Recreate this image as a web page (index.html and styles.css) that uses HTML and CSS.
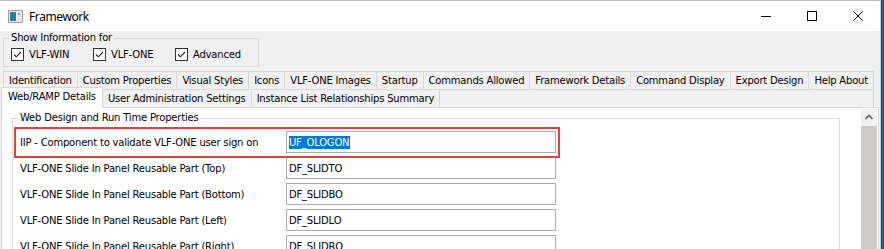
FILE: index.html
```html
<!DOCTYPE html>
<html>
<head>
<meta charset="utf-8">
<title>Framework</title>
<link rel="stylesheet" href="styles.css">
</head>
<body>
<div class="screen">
  <div class="window">
    <div class="titlebar">
      <svg class="appicon" width="15" height="13" viewBox="0 0 15 13">
        <defs>
          <linearGradient id="g1" x1="0" y1="0" x2="1" y2="1">
            <stop offset="0" stop-color="#1d8f78"/>
            <stop offset="1" stop-color="#3a6fb2"/>
          </linearGradient>
        </defs>
        <rect x="0.5" y="0.5" width="14" height="12" fill="#eeeeee" stroke="#9c9c9c"/>
        <rect x="2" y="2" width="6" height="9" fill="url(#g1)"/>
        <rect x="9" y="2" width="4" height="9" fill="#dfe6ea"/>
        <rect x="10" y="3" width="2" height="2" fill="#7fb0c8"/>
      </svg>
      <span class="title">Framework</span>
      <div class="controls">
        <span class="ctl"><svg width="10" height="10" viewBox="0 0 10 10"><line x1="0" y1="5.5" x2="10" y2="5.5" stroke="#000" stroke-width="1"/></svg></span>
        <span class="ctl"><svg width="10" height="10" viewBox="0 0 10 10"><rect x="0.5" y="0.5" width="9" height="9" fill="none" stroke="#000" stroke-width="1"/></svg></span>
        <span class="ctl"><svg width="10" height="10" viewBox="0 0 10 10"><path d="M0.5 0.5L9.5 9.5M9.5 0.5L0.5 9.5" stroke="#000" stroke-width="1"/></svg></span>
      </div>
    </div>

    <div class="showinfo">
      <div class="legend legend-grey">Show Information for</div>
      <div class="checks">
        <div class="check w82"><span class="box"><svg width="11" height="11" viewBox="0 0 11 11"><path d="M2 5.5L4.3 7.8L9 3" fill="none" stroke="#222" stroke-width="1.1"/></svg></span>VLF-WIN</div>
        <div class="check w82"><span class="box"><svg width="11" height="11" viewBox="0 0 11 11"><path d="M2 5.5L4.3 7.8L9 3" fill="none" stroke="#222" stroke-width="1.1"/></svg></span>VLF-ONE</div>
        <div class="check"><span class="box"><svg width="11" height="11" viewBox="0 0 11 11"><path d="M2 5.5L4.3 7.8L9 3" fill="none" stroke="#222" stroke-width="1.1"/></svg></span>Advanced</div>
      </div>
    </div>

    <div class="tabrow1">
      <div class="tab">Identification</div>
      <div class="tab">Custom Properties</div>
      <div class="tab">Visual Styles</div>
      <div class="tab">Icons</div>
      <div class="tab">VLF-ONE Images</div>
      <div class="tab">Startup</div>
      <div class="tab">Commands Allowed</div>
      <div class="tab">Framework Details</div>
      <div class="tab">Command Display</div>
      <div class="tab">Export Design</div>
      <div class="tab">Help About</div>
    </div>
    <div class="tabrow2">
      <div class="tab2 selected">Web/RAMP Details</div>
      <div class="tab2">User Administration Settings</div>
      <div class="tab2 last">Instance List Relationships Summary</div>
    </div>

    <div class="panel">
      <div class="scrollarea">
        <div class="props">
          <div class="legend legend-white">Web Design and Run Time Properties</div>
          <div class="rows">
            <div class="label">IIP - Component to validate VLF-ONE user sign on</div>
            <div class="input"><span class="sel">UF_OLOGON</span></div>
            <div class="label">VLF-ONE Slide In Panel Reusable Part (Top)</div>
            <div class="input">DF_SLIDTO</div>
            <div class="label">VLF-ONE Slide In Panel Reusable Part (Bottom)</div>
            <div class="input">DF_SLIDBO</div>
            <div class="label">VLF-ONE Slide In Panel Reusable Part (Left)</div>
            <div class="input">DF_SLIDLO</div>
            <div class="label">VLF-ONE Slide In Panel Reusable Part (Right)</div>
            <div class="input">DF_SLIDRO</div>
          </div>
          <div class="highlight"></div>
        </div>
      </div>
      <div class="scrollbar">
        <div class="sb-up"><svg width="16" height="17" viewBox="0 0 16 17"><path d="M4.5 10L8 6.5L11.5 10" fill="none" stroke="#606060" stroke-width="1.6"/></svg></div>
        <div class="sb-thumb"></div>
      </div>
    </div>
  </div>
  <div class="edge"></div>
</div>
</body>
</html>
```

FILE: styles.css
```css
* { box-sizing: border-box; }
html, body { margin: 0; padding: 0; }
body {
  width: 884px;
  height: 249px;
  overflow: hidden;
  background: #f0f0f0;
  font-family: "DejaVu Sans", Verdana, sans-serif;
  font-size: 10px;
  letter-spacing: -0.2px;
  color: #000;
}
.screen { display: flex; height: 249px; }
.window {
  width: 881px;
  border-top: 1px solid #bdbdbd;
  border-right: 1px solid #c6c6c6;
  background: #f0f0f0;
  display: flex;
  flex-direction: column;
  overflow: hidden;
}
.edge { width: 3px; background: #175a92; }

.titlebar {
  height: 30px;
  background: #fff;
  display: flex;
  align-items: center;
  flex: none;
}
.appicon { margin-left: 8px; display: block; }
.title {
  margin-left: 6px;
  font-family: "Noto Sans", "Open Sans", sans-serif;
  font-size: 12px;
  letter-spacing: -0.4px;
}
.controls { margin-left: auto; display: flex; height: 30px; }
.ctl {
  width: 46px;
  padding-left: 2px;
  display: flex;
  align-items: center;
  justify-content: center;
}
.ctl svg { display: block; }

.showinfo {
  margin: 7px 0 0 3px;
  width: 256px;
  border: 1px solid #dcdcdc;
  padding: 0 0 5px 7px;
  flex: none;
}
.legend {
  width: fit-content;
  margin: -8px 0 0 -2px;
  padding: 0 2px;
  line-height: 14px;
}
.legend-grey { background: #f0f0f0; }
.legend-white { background: #fff; }
.checks { display: flex; margin-top: 3px; height: 13px; }
.check { display: flex; align-items: center; height: 13px; white-space: nowrap; }
.w82 { width: 82px; }
.box {
  width: 13px;
  height: 13px;
  border: 1px solid #333;
  background: #fff;
  margin-right: 5px;
  display: flex;
  align-items: center;
  justify-content: center;
}
.box svg { display: block; }

.tabrow1 {
  display: flex;
  margin: 4px 0 0 3px;
  width: 871px;
  height: 18px;
  flex: none;
}
.tab {
  flex: 1 1 auto;
  padding: 0 4px;
  border-top: 1px solid #d9d9d9;
  border-left: 1px solid #d9d9d9;
  line-height: 17px;
  text-align: center;
  white-space: nowrap;
}
.tab:last-child { border-right: 1px solid #d9d9d9; }

.tabrow2 {
  display: flex;
  align-items: flex-start;
  margin-left: 3px;
  width: 871px;
  height: 18px;
  border-top: 1px solid #d9d9d9;
  border-right: 1px solid #d9d9d9;
  flex: none;
}
.tab2 {
  height: 17px;
  line-height: 17px;
  border-left: 1px solid #d9d9d9;
  padding: 0 5px 0 5px;
  white-space: nowrap;
}
.tab2.last { border-right: 1px solid #d9d9d9; }
.tab2.selected {
  position: relative;
  z-index: 1;
  height: 21px;
  margin: -3px -1px -1px -2px;
  padding: 0 6px 0 6px;
  line-height: 18px;
  background: #fff;
  border-top: 1px solid #d9d9d9;
  border-right: 1px solid #d9d9d9;
}

.panel {
  margin-left: 1px;
  width: 878px;
  height: 160px;
  flex: none;
  border: 1px solid #d9d9d9;
  background: #fff;
  padding: 1px 1px 0 1px;
  display: flex;
}
.scrollarea { flex: 1; overflow: hidden; }
.props {
  position: relative;
  margin: 9px 0 0 9px;
  width: 828px;
  height: 200px;
  border: 1px solid #dcdcdc;
  padding: 0 0 0 7px;
}
.rows {
  display: grid;
  grid-template-columns: 266px 270px;
  grid-auto-rows: 22px;
  row-gap: 4px;
  align-items: center;
  margin-top: 6px;
}
.label { white-space: nowrap; }
.input {
  height: 22px;
  border: 1px solid #acacac;
  padding-left: 2px;
  display: flex;
  align-items: center;
  white-space: nowrap;
}
.sel {
  background: #0078d7;
  color: #fff;
  line-height: 13px;
  padding-right: 1px;
}
.highlight {
  position: absolute;
  left: 1px;
  top: 8px;
  width: 546px;
  height: 31px;
  border: 2px solid #e04242;
}

.scrollbar { width: 16px; display: flex; flex-direction: column; }
.sb-up { height: 17px; background: #f0f0f0; }
.sb-up svg { display: block; }
.sb-thumb { flex: 1; background: #cfcbc6; }
```
